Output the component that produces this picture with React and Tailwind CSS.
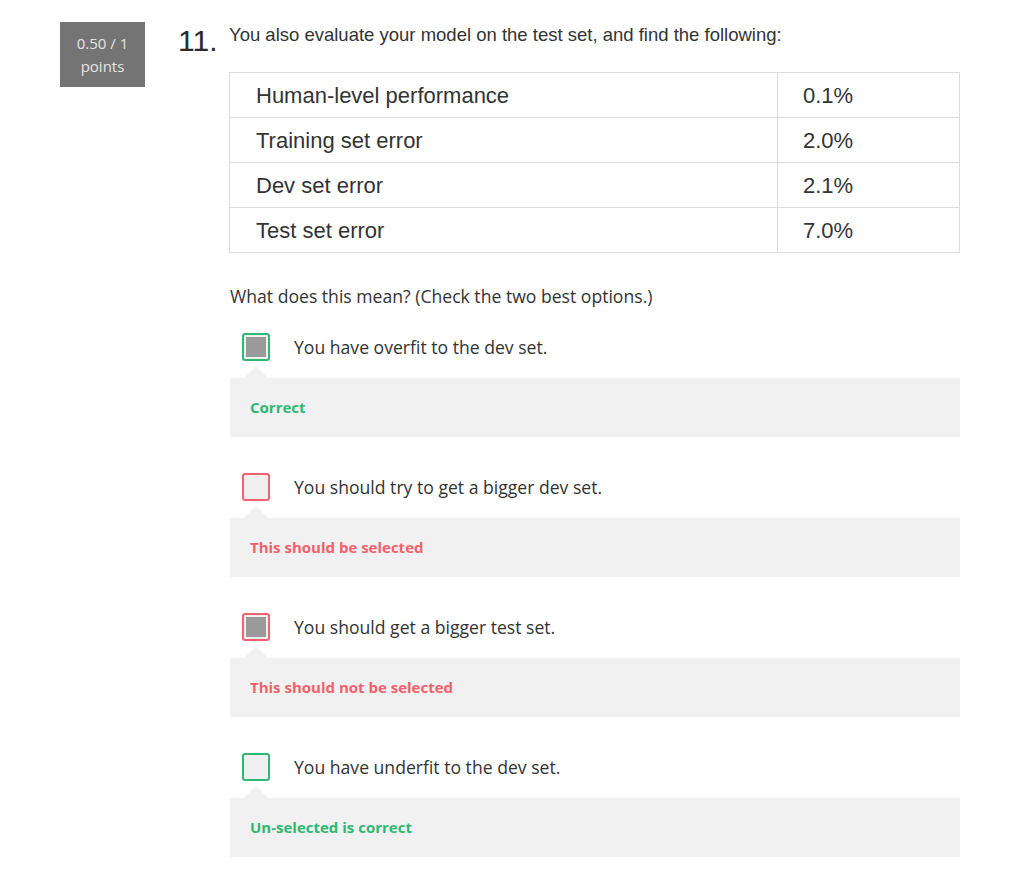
const rows = [
  ["Human-level performance", "0.1%"],
  ["Training set error", "2.0%"],
  ["Dev set error", "2.1%"],
  ["Test set error", "7.0%"],
];

const options = [
  {
    label: "You have overfit to the dev set.",
    checked: true,
    ok: true,
    note: "Correct",
  },
  {
    label: "You should try to get a bigger dev set.",
    checked: false,
    ok: false,
    note: "This should be selected",
  },
  {
    label: "You should get a bigger test set.",
    checked: true,
    ok: false,
    note: "This should not be selected",
  },
  {
    label: "You have underfit to the dev set.",
    checked: false,
    ok: true,
    note: "Un-selected is correct",
  },
];

function Option({ label, checked, ok, note, first }) {
  return (
    <div className={first ? "mt-[25px]" : "mt-[36px]"}>
      <div className="flex items-center">
        <div
          className={`ml-[13px] w-[28px] h-[28px] rounded-[3px] border-2 p-[2px] bg-[#f0f0f0] ${
            ok ? "border-[#2fb874]" : "border-[#f2616d]"
          }`}
        >
          {checked && <div className="w-full h-full bg-[#9a9a9a]" />}
        </div>
        <span className="ml-[24px] text-[17.6px] leading-[28px] text-[#333]">{label}</span>
      </div>
      <div className="mt-[5px] ml-[15px] w-0 h-0 border-l-[12px] border-r-[12px] border-b-[12px] border-l-transparent border-r-transparent border-b-[#f1f1f1]" />
      <div className="ml-[1px] bg-[#f1f1f1] h-[59px] pl-[20px] flex items-center">
        <span
          className={`font-bold text-[15px] ${ok ? "text-[#2fb874]" : "text-[#f2616d]"}`}
        >
          {note}
        </span>
      </div>
    </div>
  );
}

export default function App() {
  return (
    <div
      className="min-h-screen bg-white pt-[22px] pl-[60px] flex items-start"
      style={{ fontFamily: '"Open Sans", sans-serif' }}
    >
      {/* score badge */}
      <div className="w-[85px] h-[65px] bg-[#747474] text-[#e4e4e4] text-[15px] leading-[23px] flex flex-col items-center justify-center">
        <span>0.50 / 1</span>
        <span>points</span>
      </div>

      <div
        className="ml-[33px] w-[51px] text-[30px] leading-[36px] text-[#2a2a2a] pt-[1px]"
        style={{ fontFamily: '"Liberation Sans", Arial, sans-serif' }}
      >
        11.
      </div>

      <div className="w-[731px]">
        <p
          className="text-[18.5px] leading-[26px] text-[#333]"
          style={{ fontFamily: '"Liberation Sans", Arial, sans-serif' }}
        >
          You also evaluate your model on the test set, and find the following:
        </p>

        <table
          className="mt-[24px] w-full border-collapse text-[22px] text-[#333]"
          style={{ fontFamily: '"Liberation Sans", Arial, sans-serif' }}
        >
          <tbody>
            {rows.map(([name, val]) => (
              <tr key={name} className="h-[45px]">
                <td className="border border-[#dddddd] pl-[26px] py-0 w-[548px]">{name}</td>
                <td className="border border-[#dddddd] pl-[25px] py-0">{val}</td>
              </tr>
            ))}
          </tbody>
        </table>

        <p className="mt-[31px] ml-[1px] text-[17.6px] leading-[24px] text-[#333]">
          What does this mean? (Check the two best options.)
        </p>

        {options.map((o, i) => (
          <Option key={o.label} {...o} first={i === 0} />
        ))}
      </div>
    </div>
  );
}
